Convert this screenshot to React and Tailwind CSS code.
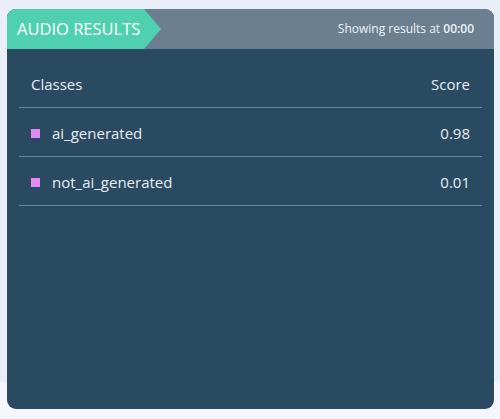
export default function App() {
  const rows = [
    { name: "ai_generated", score: "0.98" },
    { name: "not_ai_generated", score: "0.01" },
  ];

  return (
    <div
      className="w-[500px] h-[419px] pt-[9px] pl-[7px] pr-[6px] bg-[linear-gradient(to_bottom,#e9eef9_382px,#f4f6fb_382px)]"
      style={{ fontFamily: "'Open Sans', Lato, sans-serif" }}
    >
      <div className="h-[400px] flex flex-col rounded-[9px] overflow-hidden bg-[#2a4a62]">
        {/* header */}
        <div className="h-[40px] flex items-center bg-[#6b7f90]">
          <div className="relative h-full flex items-center pl-[10px] bg-[#4fd1b0] w-[137px]">
            <span className="text-white text-[16.5px] whitespace-nowrap leading-none">AUDIO RESULTS</span>
            <div className="absolute top-0 left-full h-full w-[17px] bg-[#4fd1b0] [clip-path:polygon(0_0,100%_50%,0_100%)]" />
          </div>
          <div className="ml-auto pr-[20px] text-[12px] text-[#eef2f6] whitespace-nowrap">
            Showing results at <span className="font-semibold">00:00</span>
          </div>
        </div>

        {/* table */}
        <div className="px-[12px] pt-[11px]">
          <div className="h-[48px] flex items-center justify-between px-[12px] pt-[2px] border-b border-[#6b8396] text-[15px] text-[#e6edf3]">
            <span>Classes</span>
            <span>Score</span>
          </div>
          {rows.map((row) => (
            <div
              key={row.name}
              className="h-[49px] flex items-center px-[12px] pt-[2px] border-b border-[#6b8396] text-[15px] text-[#e6edf3]"
            >
              <span className="w-[9px] h-[9px] bg-[#e08af2] mr-[12px]" />
              <span>{row.name}</span>
              <span className="ml-auto">{row.score}</span>
            </div>
          ))}
        </div>
      </div>
    </div>
  );
}
